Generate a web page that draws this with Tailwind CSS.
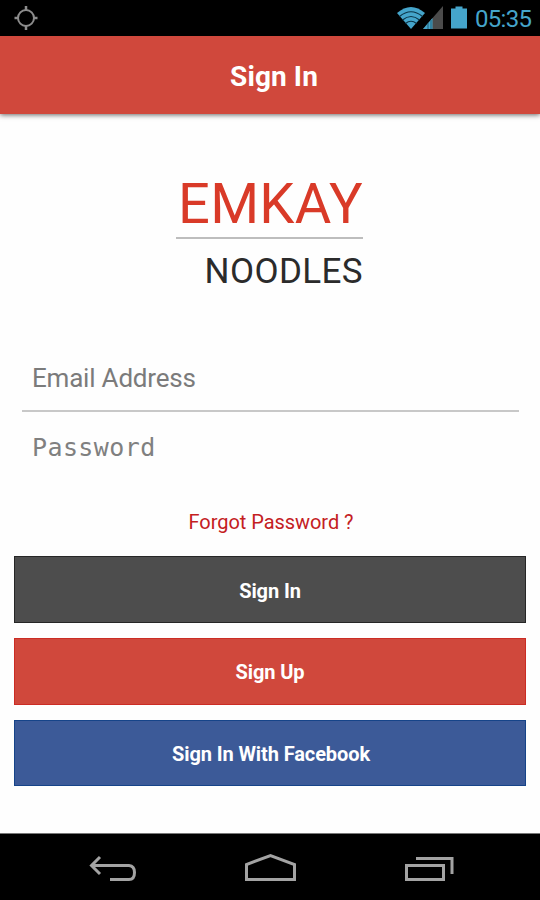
<!DOCTYPE html>
<html lang="en">
<head>
  <meta charset="UTF-8" />
  <meta name="viewport" content="width=device-width, initial-scale=1" />
  <title>Emkay Noodles - Sign In</title>
  <script src="https://cdn.jsdelivr.net/npm/@tailwindcss/browser@4"></script>
</head>
<body class="bg-[#fefefe] font-['Roboto',sans-serif] h-[900px] flex flex-col overflow-hidden">
  <!-- Status bar -->
  <div class="bg-black h-9 shrink-0 flex items-center justify-between pl-3 pr-2">
    <svg class="w-7 h-9" viewBox="0 0 28 36" fill="none" stroke="#8c8c8c" stroke-width="2">
      <circle cx="14" cy="18" r="8" />
      <path d="M14 6v5M14 25v5M2.500 18h4M21.500 18h4" stroke-width="2.500" />
    </svg>
    <div class="flex items-center">
      <svg class="w-[74px] h-9 mr-[5px]" viewBox="0 0 74 36">
        <path d="M1 13Q15 1 29 13L15 29Z" fill="#45a5cb" />
        <path d="M3.500 16.500Q15 7 26.500 16.500M6.500 20Q15 13 23.500 20M9.500 23.500Q15 19 20.500 23.500" fill="none" stroke="#0b3446" stroke-width="1.200" />
        <path d="M47 6V29H27Z" fill="#4b4b4b" />
        <path d="M36.500 18V29H27Z" fill="#45a5cb" />
        <path d="M32 23v6M35 20v9" stroke="#184c60" stroke-width="0.800" />
        <path d="M55 8.500H59.500V6.500H66.500V8.500H71V28.500H55Z" fill="#45a5cb" />
      </svg>
      <span class="text-[#45a5cb] text-[24px] leading-9 w-[57px] tracking-[-0.7px] whitespace-nowrap pt-px">05:35</span>
    </div>
  </div>

  <header class="bg-[#d0483c] h-[78px] shrink-0 flex items-center justify-center shadow-[0_1px_5px_rgba(0,0,0,0.6)] pl-2">
    <h1 class="text-white text-[28px] font-bold leading-8 tracking-[0.1px] pt-[3px]">Sign In</h1>
  </header>

  <main class="grow px-[14px] flex flex-col">
    <!-- Logo -->
    <div class="w-[187px] mt-[57px] ml-[162px] flex flex-col items-end">
      <div class="text-[#d93a28] text-[56px] leading-[66px] tracking-[0.3px] whitespace-nowrap">EMKAY</div>
      <div class="w-full h-[2px] bg-[#bdbdbd]"></div>
      <div class="text-[#2b2b2b] text-[35px] leading-10 mt-[13px] tracking-[0.4px]">NOODLES</div>
    </div>

    <form class="flex flex-col">
      <div class="ml-2 mr-[7px] mt-[53px] h-[67px] border-b-2 border-[#c8c8c8] px-[10px] pt-[17px]">
        <input type="email" placeholder="Email Address" class="block w-full h-8 text-[26px] leading-8 tracking-[-0.2px] placeholder:text-[#7b7b7b] outline-none" />
      </div>
      <div class="mx-2 px-[10px] pt-[20px] h-[74px]">
        <input type="password" placeholder="Password" class="block w-full h-8 font-['DejaVu_Sans_Mono',monospace] text-[25px] leading-8 tracking-[0.4px] placeholder:text-[#808080] outline-none" />
      </div>
      <a href="#" class="self-center mt-[20px] ml-[2px] h-8 text-[#c4201f] text-[20px] leading-8 tracking-[-0.05px] whitespace-nowrap">Forgot Password ?</a>
      <div class="flex flex-col gap-[15px] mt-[18px] text-white text-[20px] font-bold tracking-[-0.1px]">
        <button type="button" class="h-[67px] bg-[#4d4d4d] border-[1.5px] border-[#262626] pt-[2px]">Sign In</button>
        <button type="button" class="h-[67px] bg-[#d0483c] border-[1.5px] border-[#cb2c24] pt-[1px]">Sign Up</button>
        <button type="button" class="h-[66px] bg-[#3c5a98] border-[1.5px] border-[#164489] pt-[1px] pl-[2px]">Sign In With Facebook</button>
      </div>
    </form>
  </main>

  <!-- Navigation bar -->
  <nav class="bg-black h-[67px] shrink-0 border-t border-[#777]">
    <svg class="block w-full h-[66px]" viewBox="0 834 540 66" fill="none" stroke="#a3a3a3" stroke-width="3">
      <path d="M100 857L91.500 865.500L100 874M92 865.500H129Q134.500 866 134.500 872.500Q134.500 879.500 129 879.500H110" />
      <path d="M246.500 879.500V864.500L270.500 855.500L294.500 864.500V879.500Z" />
      <path d="M406.500 865.500H443.500V879.500H406.500ZM416 858.500H452V874" />
    </svg>
  </nav>
</body>
</html>
